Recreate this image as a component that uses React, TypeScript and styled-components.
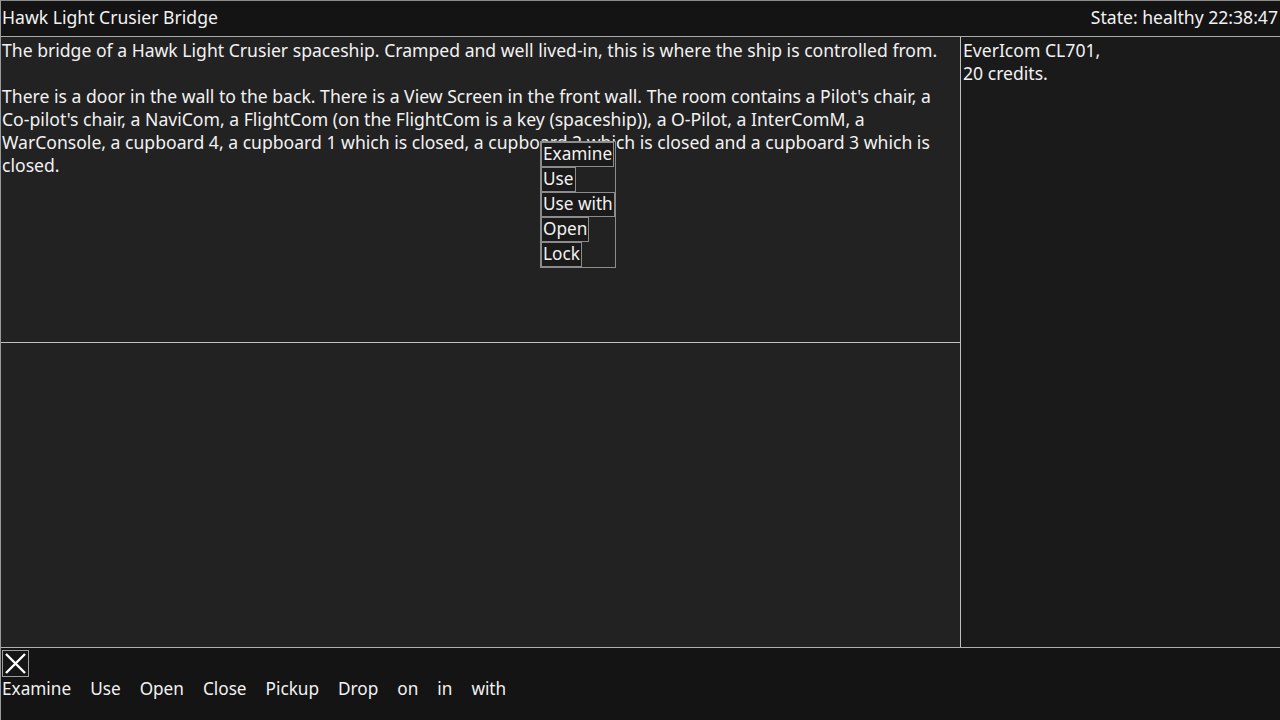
import { createGlobalStyle } from "styled-components";
import styled from "styled-components";

const GlobalStyle = createGlobalStyle`
    html, body {
        margin: 0;
        padding: 0;
        background: #141414;
        color: #f2f2f2;
        font-family: "Noto Sans", "DejaVu Sans", sans-serif;
        font-size: 17.6px;
    }
`

const Screen = styled.div`
    width: 1280px;
    height: 720px;
    display: flex;
    flex-direction: column;
    box-sizing: border-box;
    border-left: 1px solid #9a9a9a;
    overflow: hidden;
`

const TopBar = styled.div`
    height: 37px;
    box-sizing: border-box;
    display: flex;
    justify-content: space-between;
    align-items: center;
    padding: 0 2px 2px 1px;
    background: #141414;
    border-top: 1px solid #8a8a8a;
    border-bottom: 1px solid #aaaaaa;
    line-height: 23px;
`

const Main = styled.div`
    flex: 1;
    display: flex;
    min-height: 0;
    border-bottom: 1px solid #b0b0b0;
`

const LeftColumn = styled.div`
    width: 959px;
    display: flex;
    flex-direction: column;
    border-right: 1px solid #c0c0c0;
`

interface PanelProps {
    divided?: boolean;
}

const Panel = styled.div<PanelProps>`
    flex: 1;
    position: relative;
    background: #222222;
    padding: 2px 1px 0;
    line-height: 23px;
    border-bottom: ${props => props.divided ? "1px solid #c0c0c0" : "none"};
`

const Paragraph = styled.p`
    margin: 0 0 23px 0;
`

const NoWrap = styled.span`
    white-space: nowrap;
`

const SidePanel = styled.div`
    flex: 1;
    background: #1a1a1a;
    padding: 2px 2px 0;
    line-height: 23px;
`

const ContextMenu = styled.div`
    position: absolute;
    left: 539px;
    top: 104px;
    display: flex;
    flex-direction: column;
    align-items: flex-start;
    border: 1px solid #8c8c8c;
    background: #222222;
    font-size: 17.2px;
`

const MenuItem = styled.div`
    border: 1px solid #8c8c8c;
    background: #1a1a1a;
    padding: 0 1px;
    height: 23px;
    line-height: 22px;
`

const BottomBar = styled.div`
    height: 71px;
    background: #141414;
    padding: 1px 1px 0;
`

const CloseButton = styled.button`
    width: 27px;
    height: 27px;
    margin: 1px 0 0 0;
    padding: 0;
    display: block;
    background: #151515;
    border: 1px solid #a0a0a0;
    cursor: pointer;
`

const Actions = styled.div`
    display: flex;
    gap: 19px;
    line-height: 24px;
    font-size: 17.2px;
`

const Action = styled.span`
    cursor: pointer;
`

const menuItems = ["Examine", "Use", "Use with", "Open", "Lock"];
const actions = ["Examine", "Use", "Open", "Close", "Pickup", "Drop", "on", "in", "with"];

export default function App() {
    return <Screen>
        <GlobalStyle />
        <TopBar>
            <span>Hawk Light Crusier Bridge</span>
            <span>State: healthy 22:38:47</span>
        </TopBar>
        <Main>
            <LeftColumn>
                <Panel divided>
                    <Paragraph>The bridge of a Hawk Light Crusier spaceship. Cramped and well lived-in, this is where the ship is controlled from.</Paragraph>
                    <Paragraph>There is a door in the wall to the back. There is a View Screen in the front wall. The room contains a Pilot's chair, a <NoWrap>Co-pilot's</NoWrap> chair, a NaviCom, a FlightCom (on the FlightCom is a key (spaceship)), a O-Pilot, a InterComM, a WarConsole, a cupboard 4, a cupboard 1 which is closed, a cupboard 2 which is closed and a cupboard 3 which is closed.</Paragraph>
                    <ContextMenu>
                        {menuItems.map(item => <MenuItem key={item}>{item}</MenuItem>)}
                    </ContextMenu>
                </Panel>
                <Panel />
            </LeftColumn>
            <SidePanel>
                EverIcom CL701,<br />20 credits.
            </SidePanel>
        </Main>
        <BottomBar>
            <CloseButton aria-label="Close">
                <svg width="25" height="25" viewBox="0 0 25 25">
                    <path d="M3 3 L22 22 M22 3 L3 22" stroke="#ffffff" strokeWidth="2.4" />
                </svg>
            </CloseButton>
            <Actions>
                {actions.map(a => <Action key={a}>{a}</Action>)}
            </Actions>
        </BottomBar>
    </Screen>;
}
